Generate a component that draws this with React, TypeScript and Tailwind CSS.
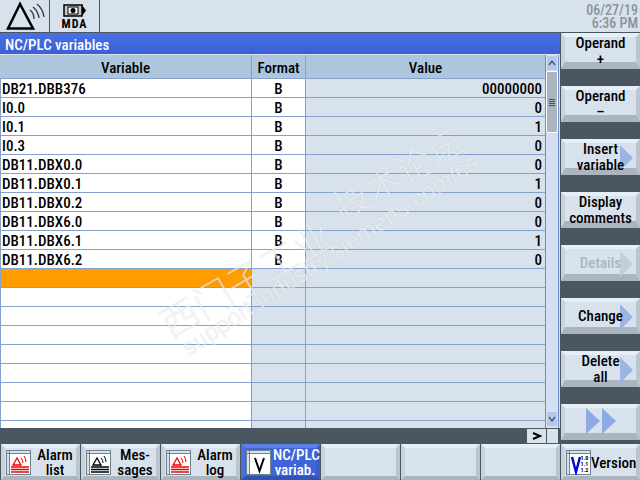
const rows = [
  { name: "DB21.DBB376", format: "B", value: "00000000" },
  { name: "I0.0", format: "B", value: "0" },
  { name: "I0.1", format: "B", value: "1" },
  { name: "I0.3", format: "B", value: "0" },
  { name: "DB11.DBX0.0", format: "B", value: "0" },
  { name: "DB11.DBX0.1", format: "B", value: "1" },
  { name: "DB11.DBX0.2", format: "B", value: "0" },
  { name: "DB11.DBX6.0", format: "B", value: "0" },
  { name: "DB11.DBX6.1", format: "B", value: "1" },
  { name: "DB11.DBX6.2", format: "B", value: "0" },
  { name: "", format: "", value: "", active: true },
  { name: "", format: "", value: "" },
  { name: "", format: "", value: "" },
  { name: "", format: "", value: "" },
  { name: "", format: "", value: "" },
  { name: "", format: "", value: "" },
  { name: "", format: "", value: "" },
  { name: "", format: "", value: "" },
  { name: "", format: "", value: "" },
];

const Arrow = ({ color = "#8fa9e6" }: { color?: string }) => (
  <svg width="13" height="26" viewBox="0 0 13 26" className="absolute right-[3px] top-[2px]">
    <path d="M0 0 L13 13 L0 26 Z" fill={color} />
  </svg>
);

const SideKey = ({
  children,
  arrow,
  disabled,
}: {
  children?: React.ReactNode;
  arrow?: boolean;
  disabled?: boolean;
}) => (
  <div className="relative flex h-[36px] w-[79px] items-center justify-center border-t-[4px] border-r-[4px] border-b-[7px] border-l-[4px] border-t-[#e6eef7] border-r-[#bac5cf] border-b-[#aab5bf] border-l-[#c9d3dd] bg-[#d8e2ec] text-center text-[15px] leading-[16px] font-medium text-black">
    {arrow && <Arrow color={disabled ? "#c4ced8" : "#9db3e8"} />}
    <span className={`relative z-10 mt-[3px] whitespace-nowrap ${disabled ? "text-[#a9b5c2]" : ""}`}>{children}</span>
  </div>
);

const WindowIcon = ({ children }: { children: React.ReactNode }) => (
  <svg width="25" height="25" viewBox="0 0 25 25" className="absolute left-[1px] top-[2px]">
    <rect x="0.5" y="0.5" width="24" height="24" fill="#d8e2ec" stroke="#6f8290" />
    <path d="M0 3.5 H25 M3.5 0 V25" stroke="#6f8290" />
    {children}
  </svg>
);

const AlarmLines = ({ color }: { color: string }) => (
  <g>
    <rect x="4" y="4" width="20" height="20" fill="#fff" />
    <path d="M11 8 L7 15 H15 Z" fill="none" stroke={color} strokeWidth="1.3" />
    <path d="M15 8 Q17 10 17 13 M18 6 Q20 9 20 12" fill="none" stroke={color} />
    <path d="M5 17 H23 M5 19.5 H23 M5 22 H23" stroke={color} strokeWidth="1.3" />
  </g>
);

const keyFace = "border-t-[#e6eef7] border-r-[#bac5cf] border-b-[#aab5bf] border-l-[#c9d3dd] bg-[#d8e2ec] text-black";
const keyActive = "border-t-[#5b80e8] border-r-[#3a5fc8] border-b-[#2f52b6] border-l-[#4a70dc] bg-[#3f66d8] text-white";

const BottomKey = ({
  label,
  icon,
  active,
  textClass = "-mr-[1px]",
}: {
  label?: React.ReactNode;
  icon?: React.ReactNode;
  active?: boolean;
  textClass?: string;
}) => (
  <div
    className={`relative flex h-[36px] w-[79px] items-center justify-end border-[4px] text-center text-[15px] leading-[15px] font-medium ${
      active ? keyActive : keyFace
    }`}
  >
    {icon}
    <span className={`mt-[2px] w-[44px] whitespace-nowrap ${textClass}`}>{label}</span>
  </div>
);

const watermark = "pointer-events-none absolute whitespace-nowrap font-light text-white/60 [text-shadow:0_0_1px_rgba(110,125,140,0.25)]";

export default function App() {
  return (
    <div className="relative flex h-[480px] w-[640px] flex-col overflow-hidden bg-[#4a5761] font-['Roboto',sans-serif] font-stretch-condensed">
      {/* Header */}
      <div className="flex h-[33px] border-b border-[#4a5761] bg-[#d8e2ec]">
        <div className="flex w-[50px] items-center justify-center border-r border-[#4a5761]">
          <svg width="44" height="30" viewBox="0 0 44 30">
            <path d="M17 3 L5 27.5 H30 Z" fill="none" stroke="#000" strokeWidth="2.5" />
            <path d="M27 9 Q31 12 31 18 M30 6 Q35 10 36 17 M34 3 Q40 8 41 16" fill="none" stroke="#3a3a3a" strokeWidth="1.4" />
          </svg>
        </div>
        <div className="flex w-[50px] flex-col items-center border-r border-[#4a5761] pt-[3px] text-[12px] leading-[12px] font-bold text-black">
          <svg width="24" height="15" viewBox="0 0 24 15">
            <rect x="1" y="2" width="18" height="11" fill="#c8c8c8" stroke="#000" strokeWidth="1.5" />
            <rect x="5" y="4" width="10" height="7" fill="#fff" stroke="#000" />
            <circle cx="10" cy="7.5" r="2.5" fill="#000" />
            <path d="M19 2 L23 7.5 L19 13 Z" fill="#000" />
          </svg>
          <span className="tracking-[1px]">MDA</span>
        </div>
        <div className="ml-auto pt-[4px] pr-[2px] text-right text-[14px] leading-[13px] font-medium text-[#8b939b]">
          <div>06/27/19</div>
          <div>6:36 PM</div>
        </div>
      </div>

      {/* Middle */}
      <div className="flex h-[411px] gap-[1px]">
        <div className="flex w-[560px] flex-col">
          <div className="h-[21px] bg-gradient-to-b from-[#4a70e4] to-[#3a5fd6] pt-[4px] pl-[5px] text-[15px] leading-[16px] font-medium text-white">
            NC/PLC variables
          </div>
          <div className="h-[1px] bg-[#d8e2ec]" />
          <div className="flex h-[373px] bg-[#d8e2ec]">
            <div className="w-[545px]">
              <div className="flex h-[24px] border-b border-[#86a2cc] bg-[#adc6de] text-center text-[15px] leading-[26px] font-medium text-black">
                <div className="w-[252px] border-r border-[#86a2cc]">Variable</div>
                <div className="w-[54px] border-r border-[#86a2cc]">Format</div>
                <div className="flex-1">Value</div>
              </div>
              <div className="h-[349px] overflow-hidden">
                {rows.map((row, i) => (
                  <div
                    key={i}
                    className="flex h-[19px] border-b border-[#86a2cc] text-[15px] leading-[21px] font-medium text-black"
                  >
                    <div
                      className={`w-[252px] border-r border-l border-[#86a2cc] pl-[1px] ${
                        row.active ? "bg-[#ff9c00]" : "bg-white"
                      }`}
                    >
                      {row.name}
                    </div>
                    <div className={`w-[54px] border-r border-[#86a2cc] text-center ${i < 10 ? "bg-white" : "bg-[#d8e2ec]"}`}>
                      {row.format}
                    </div>
                    <div className="flex-1 bg-[#d8e2ec] pr-[3px] text-right">{row.value}</div>
                  </div>
                ))}
              </div>
            </div>
            {/* Scrollbar */}
            <div className="flex w-[14px] flex-col border-x border-[#6f8fc4] bg-[#d4e0f2]">
              <div className="flex h-[16px] items-center justify-center border border-[#d8e2ec] bg-[#b4c8ee]">
                <svg width="8" height="6" viewBox="0 0 8 6">
                  <path d="M1 5 L4 1 L7 5" fill="none" stroke="#44556a" strokeWidth="1.3" />
                </svg>
              </div>
              <div className="flex h-[62px] flex-col items-center justify-center gap-[1px] rounded-[2px] border border-white bg-[#a9b5c0]">
                <div className="h-[1px] w-[6px] bg-[#44505a]" />
                <div className="h-[1px] w-[6px] bg-[#44505a]" />
                <div className="h-[1px] w-[6px] bg-[#44505a]" />
                <div className="h-[1px] w-[6px] bg-[#44505a]" />
              </div>
              <div className="flex-1" />
              <div className="mb-[1px] flex h-[16px] items-center justify-center border border-[#d8e2ec] bg-[#b4c8ee]">
                <svg width="8" height="6" viewBox="0 0 8 6">
                  <path d="M1 1 L4 5 L7 1" fill="none" stroke="#44556a" strokeWidth="1.3" />
                </svg>
              </div>
            </div>
          </div>
          {/* Horizontal scroll */}
          <div className="mt-[1px] flex h-[14px] justify-end pr-[2px]">
            <div className="flex w-[19px] items-center justify-center bg-[#d8e2ec]">
              <svg width="10" height="8" viewBox="0 0 10 8">
                <path d="M1 1 L8 4 L1 7" fill="none" stroke="#000" strokeWidth="2" />
              </svg>
            </div>
            <div className="ml-[1px] w-[11px] bg-[#d8e2ec]" />
          </div>
        </div>

        {/* Softkeys */}
        <div className="flex w-[79px] flex-col gap-[17px]">
          <SideKey>Operand<br />+</SideKey>
          <SideKey>Operand<br />–</SideKey>
          <SideKey arrow>Insert<br />variable</SideKey>
          <SideKey>Display<br />comments</SideKey>
          <SideKey arrow disabled>Details</SideKey>
          <SideKey arrow>Change</SideKey>
          <SideKey arrow>Delete<br />all</SideKey>
          <SideKey>
            <svg width="30" height="26" viewBox="0 0 30 26" className="-mt-[3px]">
              <path d="M0 0 L14 13 L0 26 Z M16 0 L30 13 L16 26 Z" fill="#8fa9e6" />
            </svg>
          </SideKey>
        </div>
      </div>

      {/* Bottom softkeys */}
      <div className="flex h-[36px] gap-[1px] pl-[1px]">
        <BottomKey label={<>Alarm<br />list</>} icon={<WindowIcon><AlarmLines color="#f00000" /></WindowIcon>} />
        <BottomKey label={<>Mes-<br />sages</>} icon={<WindowIcon><AlarmLines color="#000" /></WindowIcon>} />
        <BottomKey label={<>Alarm<br />log</>} icon={<WindowIcon><AlarmLines color="#f00000" /></WindowIcon>} />
        <BottomKey
          active
          label={<>NC/PLC<br />variab.</>}
          icon={
            <WindowIcon>
              <rect x="4" y="4" width="20" height="20" fill="#fff" />
              <path d="M9 8 L13.5 21 L18 8" fill="none" stroke="#000" strokeWidth="2" />
            </WindowIcon>
          }
        />
        <BottomKey />
        <BottomKey />
        <BottomKey />
        <BottomKey
          label="Version"
          textClass="mr-[1px]"
          icon={
            <WindowIcon>
              <rect x="4" y="4" width="20" height="20" fill="#fff" />
              <path d="M6 7 L10 22 L14 7" fill="none" stroke="#0000e0" strokeWidth="2.4" />
              <text x="14.5" y="10" fontSize="6" fontWeight="700" fill="#000">1.0</text>
              <text x="14.5" y="16" fontSize="6" fontWeight="700" fill="#000">1.1</text>
              <text x="14.5" y="22" fontSize="6" fontWeight="700" fill="#000">1.2</text>
            </WindowIcon>
          }
        />
      </div>

      {/* Watermark */}
      <div className={`${watermark} top-[278px] left-[245px] -translate-x-1/2 -translate-y-1/2 -rotate-[30deg] font-['Noto_Sans_CJK_SC',sans-serif] text-[38px] leading-[40px]`}>
        西门子工业
      </div>
      <div className={`${watermark} top-[172px] left-[397px] -translate-x-1/2 -translate-y-1/2 -rotate-[30deg] font-['Noto_Sans_CJK_SC',sans-serif] text-[36px] leading-[36px]`}>
        技术论坛
      </div>
      <div className={`${watermark} top-[255px] left-[330px] -translate-x-1/2 -translate-y-1/2 -rotate-[33deg] font-['Liberation_Sans',sans-serif] text-[24px] leading-[26px]`}>
        support.industry.siemens.com/cs
      </div>
    </div>
  );
}
